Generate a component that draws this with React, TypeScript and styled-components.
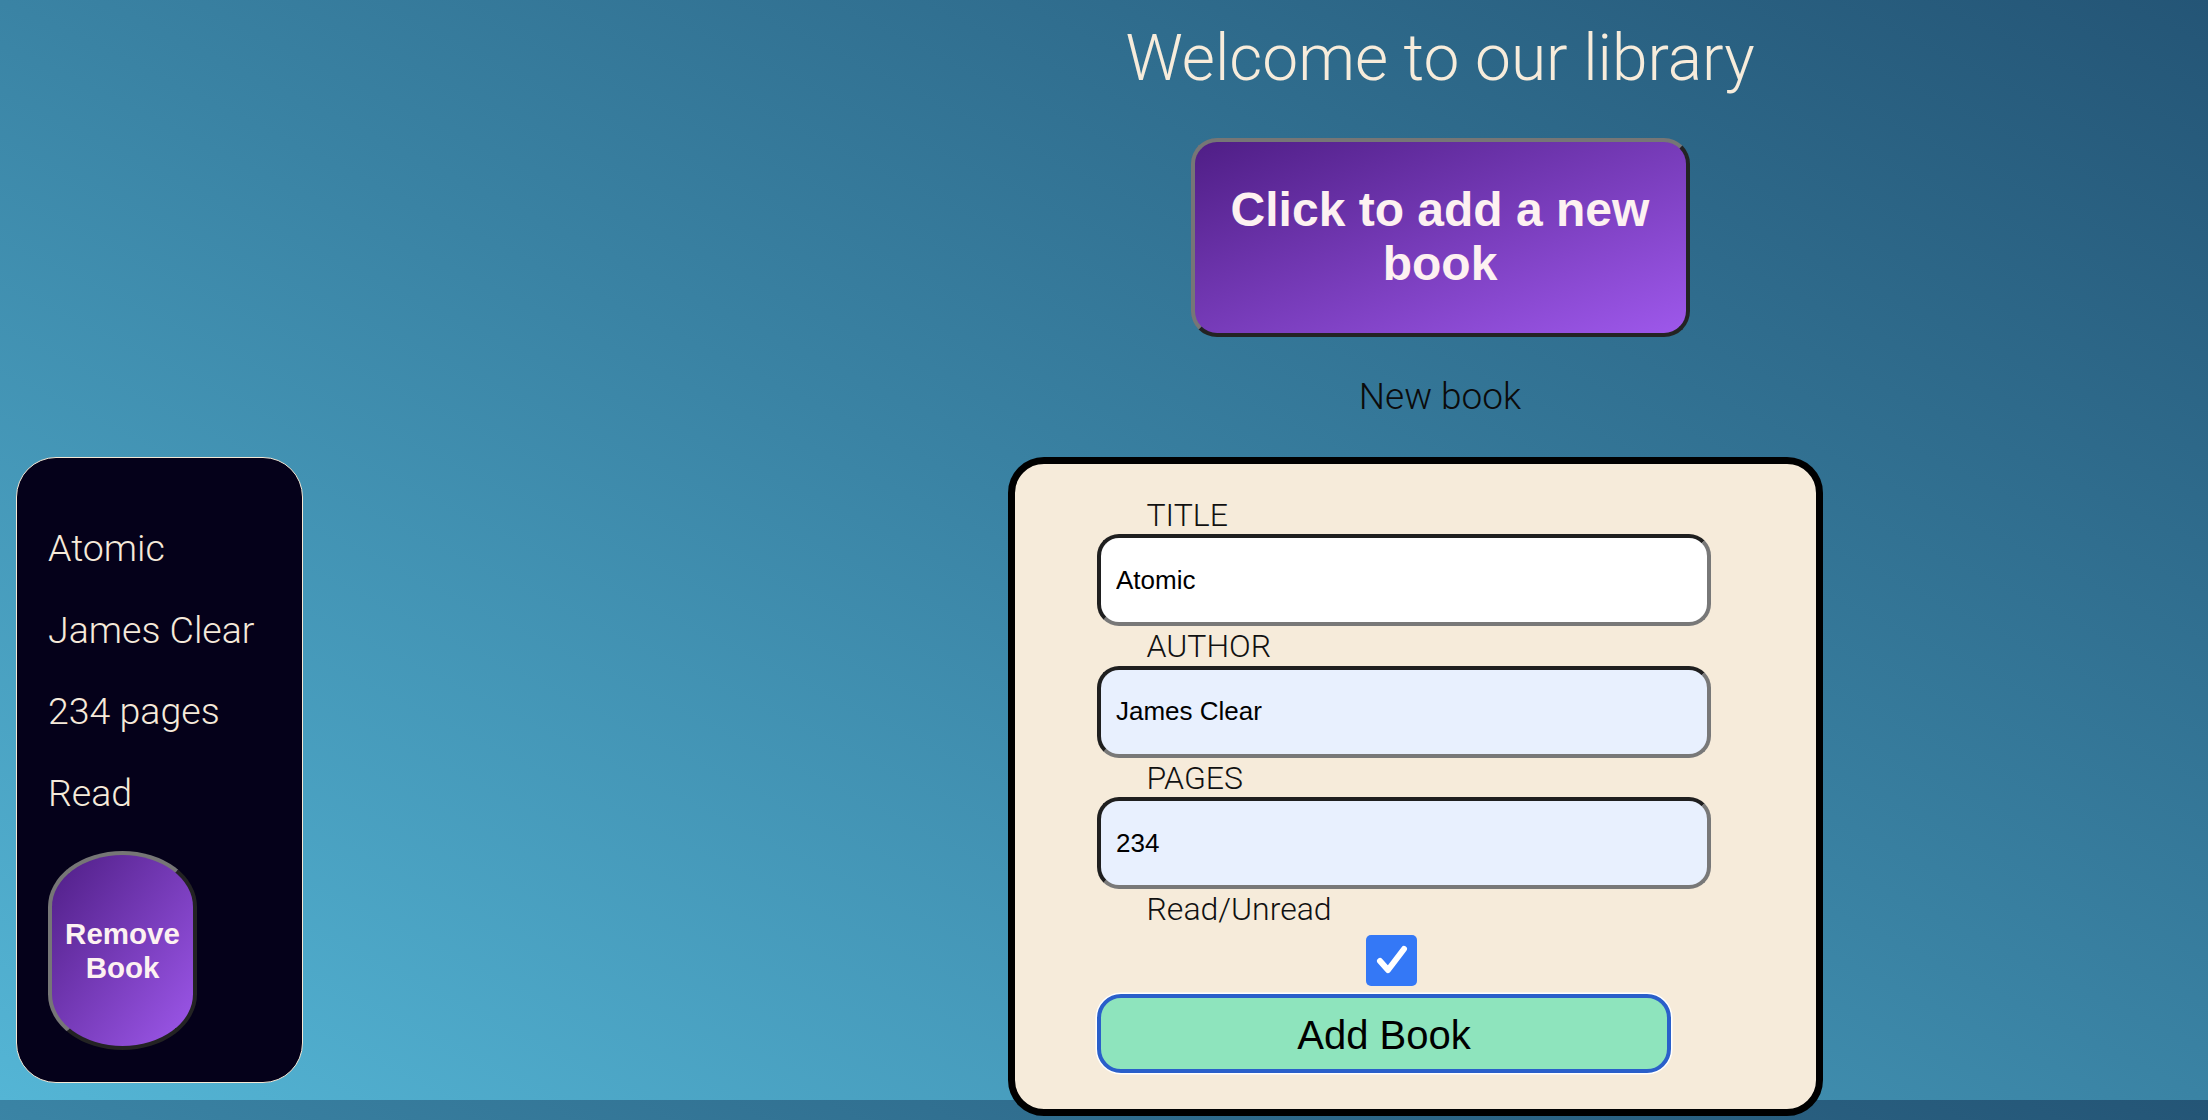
import React from "react";
import styled, { createGlobalStyle } from "styled-components";

const GlobalStyle = createGlobalStyle`
  html {
    background-image: linear-gradient(to top right, #54b5d5 0%, #3a83a4 50%, #245576 100%);
    background-size: 100% 1100px;
    background-repeat: repeat-y;
    background-color: #2f6d8f;
  }
  body {
    margin: 0;
    font-family: Roboto, "Liberation Sans", sans-serif;
  }
`;

const Page = styled.div`
  display: grid;
  grid-template-columns: 672px 1fr;
  grid-template-rows: auto auto;
`;

const Header = styled.header`
  grid-column: 2;
  grid-row: 1;
  display: flex;
  flex-direction: column;
  align-items: center;
  padding-top: 20.7px;
`;

const Title = styled.h1`
  margin: 0;
  font-family: Roboto, "Liberation Sans", sans-serif;
  font-weight: 300;
  font-size: 64px;
  line-height: 75px;
  color: #f7ecdb;
`;

const PurpleButton = styled.button<{ $shape: "rect" | "pill" }>`
  box-sizing: border-box;
  border-width: 4px;
  border-style: solid;
  border-color: #767676 #232323 #232323 #767676;
  background: linear-gradient(to bottom right, #4f1e86, #9e58eb);
  color: #fdf1f1;
  font-family: "Liberation Sans", Arial, sans-serif;
  font-weight: 700;
  text-align: center;
  cursor: pointer;
  width: ${(p) => (p.$shape === "rect" ? "499px" : "149px")};
  height: 199px;
  border-radius: ${(p) => (p.$shape === "rect" ? "26px" : "50% / 28%")};
  font-size: ${(p) => (p.$shape === "rect" ? "48px" : "29.5px")};
  line-height: ${(p) => (p.$shape === "rect" ? "54px" : "34px")};
  padding: ${(p) => (p.$shape === "rect" ? "0 20px" : "0 6px")};
`;

const OpenButton = styled(PurpleButton)`
  margin-top: 42.3px;
`;

const Subtitle = styled.h2`
  margin: 38px 0 0;
  padding-bottom: 38.6px;
  font-family: Roboto, "Liberation Sans", sans-serif;
  font-weight: 300;
  font-size: 37px;
  line-height: 43.4px;
  color: #0b0b0b;
`;

const Shelf = styled.section`
  grid-column: 1;
  grid-row: 2;
  padding-left: 16px;
  display: flex;
  flex-direction: column;
  gap: 20px;
`;

const BookCard = styled.article`
  box-sizing: border-box;
  width: 287px;
  background: #05011a;
  border: 1.5px solid #f4e7d4;
  border-radius: 40px;
  padding: 68.5px 30px 31.5px 31px;
  display: flex;
  flex-direction: column;
  align-items: flex-start;
  gap: 37.5px;
`;

const CardLine = styled.p`
  margin: 0;
  font-family: Roboto, "Liberation Sans", sans-serif;
  font-weight: 300;
  font-size: 37.5px;
  line-height: 44px;
  color: #f6eada;
`;

const RemoveButton = styled(PurpleButton)`
  margin-top: -1px;
`;

const FormBox = styled.form`
  grid-column: 2;
  grid-row: 2;
  margin-left: 336px;
  box-sizing: border-box;
  width: 815px;
  height: 659px;
  background: #f6ebda;
  border: 7px solid #000;
  border-radius: 36px;
  padding: 33px 0 0 82px;
  display: flex;
  flex-direction: column;
  align-items: flex-start;
  gap: 2px;
`;

const Field = styled.label`
  display: flex;
  flex-direction: column;
  align-items: flex-start;
`;

const FieldLabel = styled.span`
  padding-left: 49.5px;
  font-family: Roboto, "Liberation Sans", sans-serif;
  font-weight: 300;
  font-size: 32px;
  line-height: 37.5px;
  color: #111;
`;

const TextInput = styled.input<{ $filled?: boolean }>`
  box-sizing: border-box;
  width: 614px;
  height: 92px;
  border-width: 4px;
  border-style: solid;
  border-color: #1f1f1f #787878 #787878 #1f1f1f;
  border-radius: 22px;
  padding: 0 15px;
  background: ${(p) => (p.$filled ? "#e8f0fe" : "#ffffff")};
  color: #000;
  font-family: "Liberation Sans", Arial, sans-serif;
  font-size: 26px;
  outline: none;
`;

const CheckRow = styled.div`
  padding: 4px 0 0 269px;
`;

const CheckBox = styled.span`
  display: flex;
  align-items: center;
  justify-content: center;
  width: 51px;
  height: 51px;
  border-radius: 5px;
  background: #3478f6;
`;

const SubmitButton = styled.button`
  margin-top: 6px;
  box-sizing: border-box;
  width: 574px;
  height: 79px;
  padding: 4px 0 0;
  background: #8ee4bd;
  border: 4px solid #2a5fca;
  border-radius: 24px;
  box-shadow: 0 0 0 1.5px #ffffff;
  font-family: "Liberation Sans", Arial, sans-serif;
  font-size: 40px;
  color: #000;
  cursor: pointer;
`;

export default function App() {
  return (
    <>
      <GlobalStyle />
      <Page>
        <Header>
          <Title>Welcome to our library</Title>
          <OpenButton $shape="rect" type="button">
            Click to add a new book
          </OpenButton>
          <Subtitle>New book</Subtitle>
        </Header>
        <Shelf>
          <BookCard>
            <CardLine>Atomic</CardLine>
            <CardLine>James Clear</CardLine>
            <CardLine>234 pages</CardLine>
            <CardLine>Read</CardLine>
            <RemoveButton $shape="pill" type="button">
              Remove Book
            </RemoveButton>
          </BookCard>
        </Shelf>
        <FormBox onSubmit={(e) => e.preventDefault()}>
          <Field>
            <FieldLabel>TITLE</FieldLabel>
            <TextInput defaultValue="Atomic" />
          </Field>
          <Field>
            <FieldLabel>AUTHOR</FieldLabel>
            <TextInput $filled defaultValue="James Clear" />
          </Field>
          <Field>
            <FieldLabel>PAGES</FieldLabel>
            <TextInput $filled defaultValue="234" />
          </Field>
          <Field>
            <FieldLabel>Read/Unread</FieldLabel>
          </Field>
          <CheckRow>
            <CheckBox role="checkbox" aria-checked="true">
              <svg width="36" height="36" viewBox="0 0 36 36">
                <path
                  d="M6 19 L14 28 L30 7"
                  fill="none"
                  stroke="#ffffff"
                  strokeWidth="6"
                  strokeLinecap="round"
                  strokeLinejoin="round"
                />
              </svg>
            </CheckBox>
          </CheckRow>
          <SubmitButton type="submit">Add Book</SubmitButton>
        </FormBox>
      </Page>
    </>
  );
}
